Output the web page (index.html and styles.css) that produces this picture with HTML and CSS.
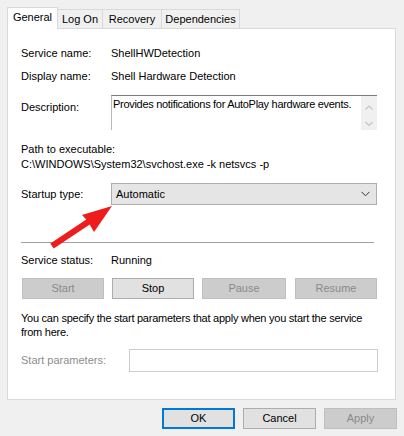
FILE: index.html
```html
<!DOCTYPE html>
<html>
<head>
<meta charset="utf-8">
<link rel="stylesheet" href="styles.css">
</head>
<body>
<div class="dialog">
  <div class="tabs">
    <div class="tab tab-active w-general">General</div>
    <div class="tab w-logon">Log On</div>
    <div class="tab w-recovery">Recovery</div>
    <div class="tab w-deps">Dependencies</div>
  </div>
  <div class="panel">
    <div class="row r1"><span class="label">Service name:</span><span>ShellHWDetection</span></div>
    <div class="row r2"><span class="label">Display name:</span><span>Shell Hardware Detection</span></div>
    <div class="row r-desc">
      <span class="label desc-label">Description:</span>
      <div class="textbox">
        <div class="tb-text">Provides notifications for AutoPlay hardware events.</div>
        <div class="scroll">
          <svg width="16" height="34" viewBox="0 0 16 34"><path d="M4.5 13.5 L8 10 L11.5 13.5" fill="none" stroke="#c4c4c4" stroke-width="1.2"/><path d="M4.5 26 L8 29.5 L11.5 26" fill="none" stroke="#c4c4c4" stroke-width="1.2"/></svg>
        </div>
      </div>
    </div>
    <div class="path-label">Path to executable:</div>
    <div class="path">C:\WINDOWS\System32\svchost.exe -k netsvcs -p</div>
    <div class="row r-startup">
      <span class="label">Startup type:</span>
      <div class="combo"><span>Automatic</span>
        <svg width="9" height="6" viewBox="0 0 9 6"><path d="M0.5 0.8 L4.5 4.8 L8.5 0.8" fill="none" stroke="#333" stroke-width="1"/></svg>
      </div>
    </div>
    <div class="sep"></div>
    <div class="row r-status"><span class="label">Service status:</span><span>Running</span></div>
    <div class="btnrow">
      <div class="btn disabled">Start</div>
      <div class="btn">Stop</div>
      <div class="btn disabled">Pause</div>
      <div class="btn disabled">Resume</div>
    </div>
    <div class="note">You can specify the start parameters that apply when you start the service from here.</div>
    <div class="row r-params">
      <span class="label plabel">Start parameters:</span>
      <div class="pinput"></div>
    </div>
  </div>
  <div class="footer">
    <div class="fbtn ok">OK</div>
    <div class="fbtn">Cancel</div>
    <div class="fbtn disabled">Apply</div>
  </div>
  <svg class="arrow" width="404" height="436" viewBox="0 0 404 436">
    <polygon points="50.3,243.5 86.3,219.5 82,215 112,206 94,232 89.7,224.5 53.7,248.5" fill="#ee1c1c"/>
  </svg>
</div>
</body>
</html>
```
FILE: styles.css
```css
html, body {
  margin: 0;
  padding: 0;
  background: #f0f0f0;
}
body {
  font-family: "Liberation Sans", Arial, sans-serif;
  font-size: 11px;
  color: #000;
  width: 404px;
  height: 436px;
  overflow: hidden;
}
.dialog {
  position: relative;
  width: 404px;
  height: 436px;
}
.tabs {
  display: flex;
  align-items: flex-end;
  padding-left: 7px;
  padding-top: 7px;
  height: 21px;
}
.tab {
  box-sizing: border-box;
  height: 19px;
  border: 1px solid #d9d9d9;
  border-bottom: none;
  border-left: none;
  background: #f0f0f0;
  line-height: 18px;
  text-align: center;
}
.tab-active {
  height: 22px;
  border-left: 1px solid #d9d9d9;
  background: #fff;
  margin-bottom: -1px;
  position: relative;
  z-index: 2;
  line-height: 19px;
}
.w-general { width: 51px; }
.w-logon { width: 45px; }
.w-recovery { width: 59px; }
.w-deps { width: 78px; }
.panel {
  box-sizing: border-box;
  margin-left: 7px;
  width: 389px;
  height: 372px;
  border: 1px solid #d9d9d9;
  background: #fff;
  padding: 17px 0 0 13px;
}
.row {
  display: flex;
  line-height: 15px;
}
.label {
  width: 90px;
  flex: none;
}
.r2 { margin-top: 8px; }
.r-desc { margin-top: 11px; align-items: flex-start; }
.desc-label { padding-top: 5px; }
.textbox {
  box-sizing: border-box;
  width: 266px;
  height: 35px;
  border-top: 1px solid #7a7a7a;
  border-left: 1px solid #b8b8b8;
  display: flex;
}
.tb-text {
  flex: 1;
  padding: 1px 0 0 1px;
  line-height: 14px;
  white-space: nowrap;
  letter-spacing: -0.3px;
  overflow: hidden;
}
.scroll {
  width: 16px;
  background: #f0f0f0;
  height: 34px;
}
.scroll svg { display: block; }
.path-label {
  margin-top: 12px;
  line-height: 15px;
}
.path {
  line-height: 15px;
}
.r-startup {
  margin-top: 11px;
  align-items: center;
}
.combo {
  box-sizing: border-box;
  width: 266px;
  height: 22px;
  border: 1px solid #adadad;
  background: #e5e5e5;
  display: flex;
  align-items: center;
  justify-content: space-between;
  padding: 0 6px 0 4px;
}
.combo svg { display: block; }
.sep {
  margin-top: 37px;
  width: 353px;
  height: 1px;
  background: #a0a0a0;
}
.r-status { margin-top: 10px; }
.btnrow {
  display: flex;
  margin-top: 10px;
  margin-left: 1px;
}
.btn {
  box-sizing: border-box;
  width: 82px;
  height: 21px;
  border: 1px solid #adadad;
  background: #e1e1e1;
  text-align: center;
  line-height: 19px;
  margin-right: 8px;
}
.btnrow .btn:nth-child(3) { width: 84px; margin-right: 9px; }
.btn.disabled, .fbtn.disabled {
  background: #cccccc;
  border-color: #bfbfbf;
  color: #8a8a8a;
}
.note {
  margin-top: 12px;
  line-height: 14px;
  width: 362px;
  letter-spacing: -0.25px;
}
.r-params {
  margin-top: 10px;
  align-items: center;
}
.plabel {
  width: 108px;
  color: #8d8d8d;
}
.pinput {
  box-sizing: border-box;
  width: 249px;
  height: 23px;
  border: 1px solid #cccccc;
}
.footer {
  display: flex;
  justify-content: flex-end;
  gap: 8px;
  padding-right: 7px;
  margin-top: 8px;
}
.fbtn {
  box-sizing: border-box;
  width: 73px;
  height: 21px;
  border: 1px solid #adadad;
  background: #e1e1e1;
  text-align: center;
  line-height: 19px;
}
.fbtn.ok {
  border: 2px solid #0078d7;
  line-height: 17px;
}
.arrow {
  position: absolute;
  left: 0;
  top: 0;
  pointer-events: none;
}
```
